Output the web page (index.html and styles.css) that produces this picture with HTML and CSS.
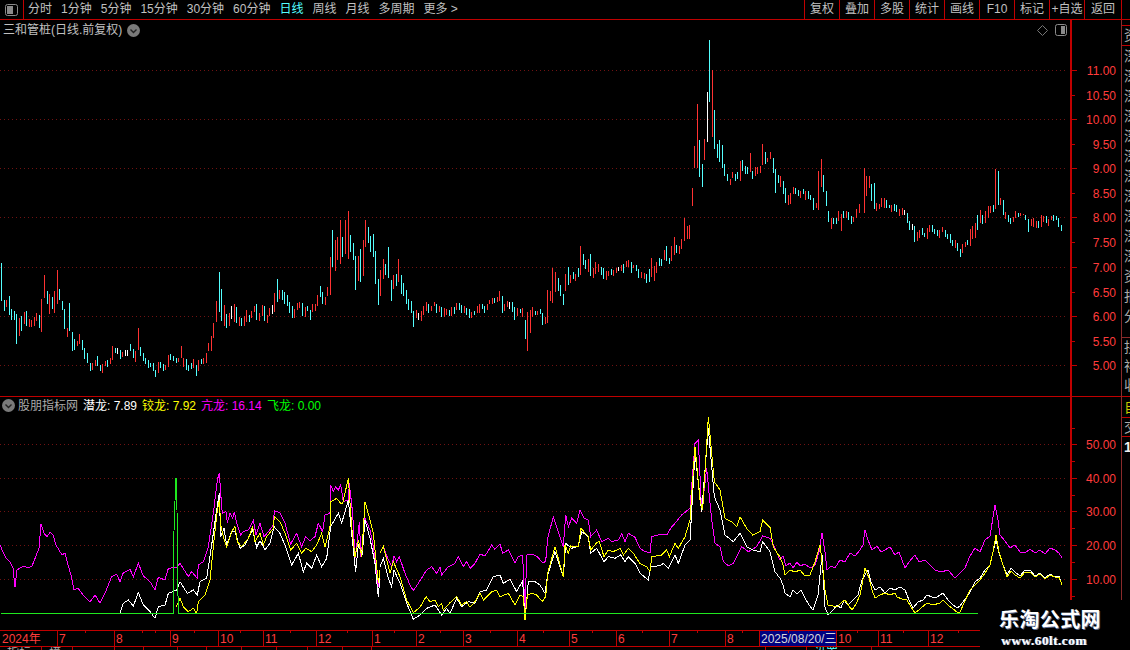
FILE: index.html
```html
<!DOCTYPE html>
<html lang="zh-CN">
<head>
<meta charset="utf-8">
<title>三和管桩</title>
<link rel="stylesheet" href="styles.css">
</head>
<body>
<div class="app">
  <header class="toolbar">
    <div class="toggle-cell">
      <svg class="win-icon" width="13" height="12" viewBox="0 0 13 12"><rect x=".5" y=".5" width="12" height="11" rx="2" fill="none" stroke="#8a8a8a"/><rect x="2" y="2" width="6" height="8" fill="#8a8a8a"/></svg>
    </div>
    <nav class="periods">
      <span>分时</span><span>1分钟</span><span>5分钟</span><span>15分钟</span><span>30分钟</span><span>60分钟</span><span class="active">日线</span><span>周线</span><span>月线</span><span>多周期</span><span>更多 &gt;</span>
    </nav>
    <nav class="actions">
      <span>复权</span><span>叠加</span><span>多股</span><span>统计</span><span>画线</span><span>F10</span><span>标记</span><span>+自选</span><span>返回</span>
    </nav>
  </header>

  <div class="workspace">
    <main class="charts">
      <section class="pane pane-price">
        <svg class="plot" width="1070" height="376" viewBox="0 20 1070 376">
          <path class="grid" d="M0 70.5H1067M0 119.5H1067M0 168.5H1067M0 217.5H1067M0 267.5H1067M0 316.5H1067M0 365.5H1067"/>
          <g transform="translate(0 250) scale(.33333)">
            <path class="c-red" d="M19 150V171M58 205V258M73 186V222M88 207V231M94 210V231M103 201V228M109 189V213M124 147V246M133 75V144M148 132V192M163 123V190M172 60V162M202 235V260M232 273V288M238 252V282M277 340V360M286 330V348M307 343V369M316 333V348M331 324V342M337 288V330M367 306V321M406 303V336M415 234V300M475 336V369M496 345V360M505 315V351M535 324V336M544 288V324M550 324V351M580 327V354M595 330V363M610 324V342M619 309V339M625 279V303M634 258V303M640 219V264M649 153V216M673 165V228M688 189V228M703 162V216M718 201V228M733 198V228M739 180V216M754 183V204M763 168V186M778 189V213M787 165V198M802 195V219M808 174V198M823 129V186M838 120V147M883 177V204M892 159V180M898 156V174"/>
            <path class="c-cyan" d="M5 40V152M14 150V183M28 138V195M34 178V210M43 183V210M49 193V282M64 198V243M79 183V228M118 195V234M142 122V162M157 140V178M178 117V150M187 153V180M193 177V237M208 159V243M217 246V303M223 267V300M247 270V300M253 294V326M262 309V339M271 339V363M292 318V348M301 345V363M322 330V351M346 294V309M361 300V327M391 282V303M400 297V324M421 291V318M430 309V333M436 324V342M445 330V354M451 339V351M460 339V363M466 360V381M481 336V354M490 342V363M511 312V330M520 318V333M529 324V339M559 327V360M565 345V363M574 339V357M589 345V378M604 327V342M658 66V186M664 117V213M679 192V234M709 171V219M724 204V228M748 195V216M769 162V210M793 168V213M832 87V156M847 120V150M853 126V162M862 135V168M868 156V189M877 168V204"/>
            <path class="c-white" d="M352 294V312M376 300V318M382 300V318M694 168V207M817 165V192"/>
          </g>
          <g transform="translate(300 200) scale(.33333)">
            <path class="c-red" d="M16 321V351M37 312V336M46 312V333M52 285V318M76 291V315M82 261V288M91 171V285M106 120V213M112 111V180M121 60V192M136 60V162M145 33V177M175 168V243M190 120V228M196 60V141M241 210V288M250 177V237M280 225V267M295 177V246M349 330V354M364 333V363M370 318V345M379 306V333M394 318V333M403 306V318M418 318V336M433 324V351M439 327V345M454 321V348M469 309V330M493 318V339M514 336V354M532 318V339M538 312V339M562 312V330M568 300V312M577 294V312M592 291V306M598 273V303M613 312V333M622 303V321M652 324V348M667 324V351M682 336V453M691 330V399M697 321V351M712 333V345M736 351V372M742 270V369M751 273V303M757 204V309M766 216V276M796 222V273M811 225V249M826 222V243M841 138V225M865 177V216M880 204V234M886 186V222M895 192V216M919 213V240M925 213V228M940 210V228M949 204V219M964 195V213M979 183V201M985 180V201M1000 195V204M1024 216V234M1033 219V237M1054 174V231M1063 198V243M1069 186V219M1093 150V180M1114 138V183M1123 111V165M1138 138V162M1144 117V147M1153 54V123M1162 78V117M1168 75V117"/>
            <path class="c-cyan" d="M7 309V348M22 318V333M31 330V360M61 258V291M67 276V312M97 90V201M127 111V171M151 105V156M160 129V180M166 168V270M181 147V246M205 81V129M211 108V156M220 102V171M226 153V252M235 237V315M256 192V225M265 141V234M274 240V303M289 222V258M304 225V282M310 249V288M319 270V312M325 297V330M334 303V339M340 333V381M385 312V339M409 312V339M424 321V351M448 330V348M463 321V342M478 309V330M484 315V339M499 324V345M508 327V354M523 333V345M547 312V327M553 318V339M583 294V309M607 288V339M637 306V336M643 321V360M661 327V339M676 360V417M706 333V345M721 327V342M727 339V375M775 234V273M781 255V288M790 282V315M805 201V255M820 216V237M835 204V231M850 162V195M856 180V207M871 162V228M904 201V225M910 204V237M934 207V225M970 192V219M994 186V219M1009 195V213M1015 207V234M1039 222V249M1048 207V246M1078 174V198M1084 177V198M1099 138V183M1108 174V192M1129 135V159"/>
            <path class="c-white" d="M355 339V360M628 306V327M955 201V213"/>
          </g>
          <g transform="translate(660 30) scale(.33333)">
            <path class="c-red" d="M97 474V528M103 348V414M112 222V415M133 327V390M157 120V321M211 447V465M217 426V444M241 393V453M271 369V426M286 411V438M292 411V432M301 408V429M307 342V405M322 384V396M331 366V387M361 438V471M385 495V525M391 489V522M400 471V492M421 483V504M436 483V510M469 519V534M475 423V540M484 387V471M514 564V597M535 543V573M544 552V603M559 543V564M580 561V576M589 537V564M598 522V549"/>
            <path class="c-cyan" d="M118 330V441M127 402V471M148 30V216M163 240V357M172 342V384M178 330V396M187 345V414M193 402V438M202 432V453M226 432V453M232 426V447M247 390V423M256 408V432M262 411V432M277 423V447M316 366V402M340 384V429M346 417V489M355 435V459M370 453V492M376 474V519M406 474V492M415 480V498M430 477V492M445 483V507M451 495V510M460 504V540M490 435V486M499 483V528M505 543V576M520 564V582M529 564V582M550 543V564M565 546V570M574 558V582"/>
            <path class="c-white" d="M142 186V336"/>
          </g>
          <g transform="translate(780 140) scale(.33333)">
            <path class="c-red" d="M253 84V219M259 108V168M268 108V144M289 189V213M298 192V207M304 174V201M313 174V204M334 195V216M358 207V228M367 204V225M412 276V303M418 270V294M442 264V297M448 255V276M478 270V294M487 261V276M526 300V324M547 312V339M556 306V321M571 267V318M577 258V297M586 249V294M601 210V249M616 213V249M625 198V234M631 198V219M646 87V207M661 174V195M676 216V237M700 231V246M706 213V234M721 219V228M730 222V225M754 237V258M760 234V261M769 243V264M784 225V261M790 228V246M805 237V258M814 228V240"/>
            <path class="c-cyan" d="M274 132V183M283 129V207M319 180V204M328 195V204M343 192V213M349 195V216M382 219V249M388 243V270M403 258V306M427 264V285M433 279V291M457 255V276M463 267V282M472 270V288M496 270V291M502 282V297M511 282V309M517 300V318M532 309V333M541 327V351M562 300V315M592 225V270M607 225V252M640 195V216M655 93V195M670 180V225M685 225V246M691 234V252M715 219V231M736 225V240M745 237V276M775 243V264M799 228V249M820 225V243M829 228V240M835 234V261M844 255V273"/>
            <path class="c-white" d="M373 210V225M397 252V270"/>
          </g>
        </svg>
        <div class="axis">
          <svg width="49" height="376" viewBox="1072 20 49 376">
            <path class="tick" d="M1072 70.5H1077M1072 95.5H1075M1072 119.5H1077M1072 144.5H1075M1072 168.5H1077M1072 193.5H1075M1072 217.5H1077M1072 242.5H1075M1072 267.5H1077M1072 292.5H1075M1072 316.5H1077M1072 341.5H1075M1072 365.5H1077"/>
            <g class="axis-labels">
              <text x="1116" y="75">11.00</text><text x="1116" y="100">10.50</text><text x="1116" y="124">10.00</text><text x="1116" y="149">9.50</text><text x="1116" y="173">9.00</text><text x="1116" y="198">8.50</text><text x="1116" y="222">8.00</text><text x="1116" y="247">7.50</text><text x="1116" y="272">7.00</text><text x="1116" y="297">6.50</text><text x="1116" y="321">6.00</text><text x="1116" y="346">5.50</text><text x="1116" y="370">5.00</text>
            </g>
          </svg>
        </div>
        <div class="pane-title">
          <span>三和管桩(日线.前复权)</span>
          <svg width="13" height="13" viewBox="0 0 13 13"><circle cx="6.5" cy="6.5" r="6.5" fill="#7a7a7a"/><path d="M3.5 5.5 6.5 8.5 9.5 5.5" fill="none" stroke="#222" stroke-width="1.4"/></svg>
        </div>
        <div class="pane-tools">
          <svg width="11" height="11" viewBox="0 0 11 11"><path d="M5.5 .5 10.5 5.5 5.5 10.5 .5 5.5Z" fill="none" stroke="#777"/></svg>
          <svg width="12" height="12" viewBox="0 0 12 12"><rect x=".5" y=".5" width="11" height="11" rx="2" fill="none" stroke="#8a8a8a"/><rect x="6" y="2" width="4" height="8" fill="#8a8a8a"/></svg>
        </div>
      </section>

      <section class="pane pane-ind">
        <svg class="plot" width="1070" height="233" viewBox="0 397 1070 233">
          <path class="grid" d="M0 444.5H1067M0 478.5H1067M0 511.5H1067M0 545.5H1067M0 579.5H1067"/>
          <polyline class="l-magenta" points="0,545 3,552 6,558 10,562 13,568 15,587 17,570 20,568 24,566 28,568 32,566 36,556 39,548 41,524 44,533 47,537 50,532 53,535 56,545 62,555 65,553 68,565 71,575 74,590 78,588 83,595 90,602 95,595 100,603"/>
          <g transform="translate(100 470) scale(.33333)">
            <polyline class="l-magenta" points="0,400 15,370 35,320 50,313 60,335 70,308 90,298 100,320 115,280 130,318 150,335 165,360 175,322 195,330 205,295 230,292 240,280 265,320 275,305 292,325 295,285 310,275 325,230 340,130 352,30 358,8 362,70 367,130 378,125 382,158 390,130 398,145 403,125 410,160 422,195 430,185 445,180 460,150 468,195 480,160 492,200 505,185 520,165 523,122 540,128 555,160 572,222 590,190 605,230 617,200 630,212 645,200 655,160 668,185 675,135 690,130 692,45 700,65 707,50 715,60 722,45 730,95 745,90 748,40 758,130 765,265 770,230 778,155 783,260 795,145 810,180 820,230 835,350 840,300"/>
            <polyline class="l-white" points="60,430 70,400 85,390 100,408 115,368 130,405 150,425 165,445 175,410 195,405 205,370 230,360 240,335 262,370 280,360 292,375 300,335 320,325 335,225 350,120 358,70 362,200 372,175 380,225 395,185 405,185 420,235 435,225 458,180 470,232 480,212 495,240 510,220 522,170 540,190 557,230 575,285 595,250 610,305 620,280 635,295 650,255 665,290 680,265 692,170 715,130 725,160 745,90 755,190 767,305 775,225 787,250 795,150 810,205 825,280 835,380 840,320"/>
            <polyline class="l-yellow" points="228,412 240,385 250,410 265,425 280,415 290,430 295,395 315,375 330,330 340,230 352,120 358,90 362,165 370,200 380,230 395,185 405,170 412,215 425,230 445,205 458,170 465,215 480,190 490,225 500,200 520,175 523,140 540,155 555,190 572,240 590,220 605,250 617,235 635,245 650,225 665,190 675,230 690,170 692,95 710,85 722,100 728,100 745,25 755,170 765,260 775,210 785,260 795,95 810,150 820,190 835,340 840,300"/>
          </g>
          <g transform="translate(380 420) scale(.33333)">
            <polyline class="l-magenta" points="0,400 10,380 25,420 35,440 42,408 50,425 58,410 75,460 90,495 100,512 115,490 140,450 155,440 170,460 180,440 185,465 205,440 225,430 235,410 250,440 260,425 270,445 285,430 300,402 315,408 335,375 345,388 360,372 368,400 385,390 405,428 415,410 428,405 435,580 440,405 455,402 472,410 487,428 497,425 503,355 520,290 530,320 550,380 557,285 565,320 575,295 590,310 600,270 612,295 625,300 632,350 650,330 665,365 685,355 695,365 715,360 725,340 735,365 745,340 765,352 780,385 795,395 810,398 815,350 845,342 860,345 875,320 885,310 905,285 930,265 945,70 955,60 965,275 980,145 995,300 1005,370 1020,380 1030,425 1045,437 1060,430 1075,400 1085,380 1105,395 1130,380 1148,348 1170,355 1185,385 1200,420"/>
            <polyline class="l-white" points="0,440 10,415 25,475 35,500 42,450 60,490 80,550 100,598 120,585 140,565 165,555 185,585 200,565 210,580 230,535 245,560 265,545 285,550 300,515 320,510 340,470 360,465 370,490 390,478 410,515 428,482 435,600 445,485 465,485 480,495 495,520 503,465 525,395 550,470 557,370 575,385 595,378 605,335 625,350 632,400 650,385 672,425 685,410 705,415 722,405 735,425 745,410 765,430 780,460 805,480 812,440 840,437 850,430 865,445 885,405 895,430 915,375 930,360 945,100 965,275 985,25 1003,230 1020,270 1035,345 1060,365 1080,340 1100,380 1120,390 1140,395 1148,365 1170,395 1185,455 1200,475"/>
            <polyline class="l-yellow" points="0,400 10,380 30,460 40,425 60,470 80,540 100,578 120,562 138,530 150,545 165,540 175,560 185,550 190,570 210,548 230,530 245,555 260,545 270,562 285,545 300,520 310,540 335,515 350,510 360,530 385,520 405,555 420,525 430,530 435,600 442,525 455,520 470,525 487,545 497,530 503,460 525,380 550,470 555,375 565,400 572,378 595,380 603,325 625,350 632,390 650,368 658,365 672,410 685,390 700,395 720,385 730,405 745,385 760,400 780,430 800,440 810,455 815,410 845,405 860,390 868,410 885,370 895,385 915,350 930,300 945,80 960,240 968,270 985,-9 1003,185 1020,210 1035,295 1055,305 1070,320 1080,290 1100,325 1118,345 1140,335 1148,300 1170,322 1180,380 1195,405 1200,410"/>
          </g>
          <polyline class="l-magenta" points="780,560 783,556 786,566 790,563 793,568 797,562 800,566 805,564 810,568 815,565 819,552 822,533 825,552 827,570 831,566 835,568 840,560 845,562 850,553 855,556 860,550 863,545 865,530 868,540 872,550 877,546 881,552 885,550 890,547 895,555 899,552 905,568 909,562 915,555 919,562 925,560 930,565 935,570 941,572 948,570 955,578 960,573 965,568 970,556 975,548 980,552 985,540 990,536 995,505 998,520 1000,535 1005,541 1010,548 1015,545 1020,552 1025,553 1030,549 1035,553 1040,550 1045,554 1050,548 1055,550 1059,553 1062,558"/>
          <polyline class="l-white" points="780,578 783,585 785,593 790,597 793,590 797,594 801,590 805,598 809,605 813,610 818,595 822,555 825,607 828,615 833,610 837,605 841,608 844,600 848,605 853,600 858,595 862,580 865,575 868,570 871,582 875,590 880,587 885,593 890,588 895,590 900,587 905,590 909,600 913,608 918,602 923,600 927,595 932,597 937,597 943,593 948,600 952,604 957,608 960,606 963,602 970,592 975,582 980,578 985,570 990,565 993,552 996,540 999,553 1003,565 1007,575 1011,568 1015,572 1020,576 1025,570 1030,570 1035,576 1040,573 1045,578 1050,574 1055,577 1059,576 1062,585"/>
          <polyline class="l-yellow" points="780,557 783,565 785,575 790,570 795,572 800,570 805,576 810,575 815,562 820,545 823,570 825,590 828,605 833,606 837,607 841,603 845,600 849,606 852,610 856,604 860,595 862,585 865,568 869,578 872,590 875,598 880,595 885,593 890,595 895,593 897,597 902,599 907,600 911,607 915,613 920,609 927,603 933,605 940,603 943,600 948,605 953,609 957,612 960,612 965,601 970,590 975,585 980,580 985,573 990,565 993,552 996,535 999,552 1003,565 1007,577 1011,571 1015,575 1020,578 1025,572 1030,572 1035,577 1040,574 1045,579 1050,575 1055,577 1059,577 1062,585"/>
          <path class="c-green" d="M1 613.5H173.5V546L175 501 176 478 177 510 177.5 577 178.5 613.5H978"/>
        </svg>
        <div class="axis">
          <svg width="49" height="233" viewBox="1072 397 49 233">
            <path class="tick" d="M1072 428.5H1075M1072 444.5H1077M1072 461.5H1075M1072 478.5H1077M1072 495.5H1075M1072 511.5H1077M1072 528.5H1075M1072 545.5H1077M1072 562.5H1075M1072 579.5H1077M1072 596.5H1075"/>
            <g class="axis-labels">
              <text x="1116" y="449">50.00</text><text x="1116" y="483">40.00</text><text x="1116" y="516">30.00</text><text x="1116" y="550">20.00</text><text x="1116" y="584">10.00</text>
            </g>
          </svg>
        </div>
        <div class="legend">
          <svg width="13" height="13" viewBox="0 0 13 13"><circle cx="6.5" cy="6.5" r="6.5" fill="#7a7a7a"/><path d="M3.5 5.5 6.5 8.5 9.5 5.5" fill="none" stroke="#222" stroke-width="1.4"/></svg>
          <span class="legend-name">股朋指标网</span>
          <span class="lg-white">潜龙: 7.89</span>
          <span class="lg-yellow">铰龙: 7.92</span>
          <span class="lg-magenta">亢龙: 16.14</span>
          <span class="lg-green">飞龙: 0.00</span>
        </div>
      </section>

      <svg class="time-axis" width="1121" height="17" viewBox="0 630 1121 17">
        <rect class="date-bg" x="759" y="631" width="77" height="15"/>
        <path class="time-line" d="M0 630.5H980M0 646.5H1121M57.5 630V646M114.5 630V646M170.5 630V646M218.5 630V646M263.5 630V646M316.5 630V646M372.5 630V646M416.5 630V646M463.5 630V646M517.5 630V646M569.5 630V646M616.5 630V646M669.5 630V646M725.5 630V646M759.5 630V646M836.5 630V646M878.5 630V646M928.5 630V646"/>
        <path class="time-line" d="M85.5 630V633M142.5 630V633M155.5 630V633M194.5 630V633M240.5 630V633M290.5 630V633M347.5 630V633M394.5 630V633M440.5 630V633M490.5 630V633M543.5 630V633M592.5 630V633M642.5 630V633M697.5 630V633M742.5 630V633M788.5 630V633M857.5 630V633M903.5 630V633M958.5 630V633"/>
        <g class="time-labels">
          <text x="2" y="643">2024年</text><text x="59" y="643">7</text><text x="116" y="643">8</text><text x="172" y="643">9</text><text x="220" y="643">10</text><text x="265" y="643">11</text><text x="318" y="643">12</text><text x="374" y="643">1</text><text x="418" y="643">2</text><text x="465" y="643">3</text><text x="519" y="643">4</text><text x="571" y="643">5</text><text x="618" y="643">6</text><text x="671" y="643">7</text><text x="727" y="643">8</text><text x="838" y="643">10</text><text x="880" y="643">11</text><text x="930" y="643">12</text>
        </g>
        <text class="date-text" x="761" y="643">2025/08/20/三</text>
      </svg>

      <div class="tabs">
        <span class="tab">指标</span><span class="tab">模</span><span class="tab"></span><span class="tab"></span><span class="tab"></span><span class="tab"></span><span class="tab"></span><span class="tab"></span><span class="tab"></span><span class="tab"></span><span class="tab"></span><span class="tab"></span><span class="tab tab-white">一</span><span class="tab tab-cyan">设置</span><span class="tab"></span>
      </div>
    </main>

    <aside class="rail">
      <div class="rail-gap"></div>
      <div class="rail-cell rail-top">资</div>
      <div class="rail-list">
        <span>深</span><span>深</span><span>深</span><span>深</span><span>深</span><span>深</span><span>深</span><span>深</span><span>深</span><span>深</span><span>深</span><span>资</span><span>报</span><span>分</span>
      </div>
      <div class="rail-cell rail-group"><span>拐</span><span>祥</span><span>收</span></div>
      <div class="rail-cell rail-self">自</div>
      <div class="rail-cell rail-trade">交</div>
      <div class="rail-num">1</div>
    </aside>
  </div>

  <div class="watermark">
    <strong class="wm-cn">乐淘公式网</strong>
    <strong class="wm-url">www.60lt.com</strong>
  </div>
</div>
</body>
</html>
```

FILE: styles.css
```css
* { box-sizing: border-box; }
html, body { margin: 0; padding: 0; background: #000; }
body { font-family: "Liberation Sans", "Noto Sans CJK SC", sans-serif; font-size: 12px; color: #c0c0c0; }

.app { position: relative; width: 1130px; height: 650px; overflow: hidden; display: flex; flex-direction: column; background: #000; }

.toolbar { height: 20px; flex: none; display: flex; align-items: stretch; border-bottom: 1px solid #c00000; line-height: 19px; }
.toggle-cell { width: 24px; border-right: 1px solid #c00000; display: flex; align-items: center; justify-content: center; }
.periods { display: flex; gap: 9px; padding-left: 4px; flex: 1; }
.periods .active { color: #54ffff; }
.actions { display: flex; margin-right: 8px; border-left: 1px solid #c00000; }
.actions span { width: 35px; text-align: center; border-right: 1px solid #c00000; white-space: nowrap; }
.actions span:last-child { width: 37px; }

.workspace { flex: 1; min-height: 0; display: flex; }
.charts { width: 1121px; flex: none; display: flex; flex-direction: column; }

.pane { position: relative; display: grid; grid-template-columns: 1070px 51px; }
.pane-price { height: 377px; border-bottom: 1px solid #c00000; }
.pane-ind { height: 233px; }
.plot { display: block; }
.axis { border-left: 2px solid #c00000; }
.axis svg { display: block; }

.pane-title { position: absolute; left: 3px; top: 2px; display: flex; align-items: center; gap: 5px; line-height: 16px; }
.pane-tools { position: absolute; left: 1037px; top: 4px; display: flex; gap: 7px; align-items: center; }
.legend { position: absolute; left: 2px; top: 0; height: 17px; display: flex; align-items: center; line-height: 16px; white-space: nowrap; }
.legend-name { margin-left: 3px; width: 65px; color: #aaa; }
.lg-white { width: 59px; color: #fff; }
.lg-yellow { width: 59px; color: #ff0; }
.lg-magenta { width: 66px; color: #f0f; }
.lg-green { color: #0f0; }

.grid { fill: none; stroke: #701212; stroke-width: 1; stroke-dasharray: 1 3; shape-rendering: crispEdges; }
.tick, .time-line { fill: none; stroke: #c00000; stroke-width: 1; shape-rendering: crispEdges; }
.c-red, .c-cyan, .c-white, .c-green { fill: none; stroke-width: 1; vector-effect: non-scaling-stroke; shape-rendering: crispEdges; }
.c-red { stroke: #ff3232; }
.c-cyan { stroke: #54ffff; }
.c-white { stroke: #fff; }
.c-green { stroke: #1fe81f; }
.l-magenta, .l-white, .l-yellow { fill: none; stroke-width: 1; vector-effect: non-scaling-stroke; shape-rendering: crispEdges; }
.l-magenta { stroke: #f0f; }
.l-white { stroke: #fff; }
.l-yellow { stroke: #ff0; }

.axis-labels text { fill: #ff3c3c; font-size: 12px; text-anchor: end; }
.time-axis { display: block; flex: none; }
.time-labels text { fill: #ff3c3c; font-size: 12px; }
.date-bg { fill: #000080; }
.date-text { fill: #d8d8d8; font-size: 12px; }

.tabs { height: 3px; flex: none; display: grid; grid-template-columns: 42px 31px 42px 29px 34px 29px 35px 35px 31px 35px 29px 394px 41px 65px 1fr; overflow: hidden; line-height: 12px; }
.tab { border-right: 1px solid #c00000; padding-left: 7px; color: #aaa; height: 12px; }
.tab-white { color: #fff; }
.tab-cyan { color: #54ffff; }

.rail { width: 9px; flex: none; overflow: hidden; display: flex; flex-direction: column; border-left: 1px solid #8a2a2a; font-size: 14px; line-height: 20px; color: #aaa; white-space: nowrap; }
.rail-gap { height: 5px; flex: none; }
.rail-cell, .rail-list, .rail-num { padding-left: 2px; flex: none; }
.rail-top { height: 21px; border-top: 1px solid #c00000; border-bottom: 1px solid #c00000; line-height: 19px; }
.rail-list { height: 291px; display: flex; flex-direction: column; }
.rail-group { height: 60px; display: flex; flex-direction: column; border-top: 1px solid #8a2a2a; border-bottom: 1px solid #c00000; line-height: 19px; }
.rail-self { height: 21px; color: #c8c800; border-bottom: 1px solid #c00000; }
.rail-trade { height: 19px; border-bottom: 1px solid #c00000; line-height: 18px; }
.rail-num { font-weight: bold; color: #eee; }

.watermark { position: absolute; left: 980px; top: 600px; width: 150px; height: 50px; background: #000; display: flex; flex-direction: column; align-items: flex-start; padding: 7px 0 0 19px; color: #fff; font-family: "Liberation Serif", "Noto Sans CJK SC", serif; }
.wm-cn { font-size: 20px; line-height: 24px; letter-spacing: .4px; font-family: "Noto Sans CJK SC", sans-serif; font-weight: 700; text-shadow: 1px 1px 0 #5a6a90; }
.wm-url { font-size: 13.5px; line-height: 16px; letter-spacing: .4px; margin: 2px 0 0 2px; text-shadow: 1px 0 0 #7a8ab0; }
```
